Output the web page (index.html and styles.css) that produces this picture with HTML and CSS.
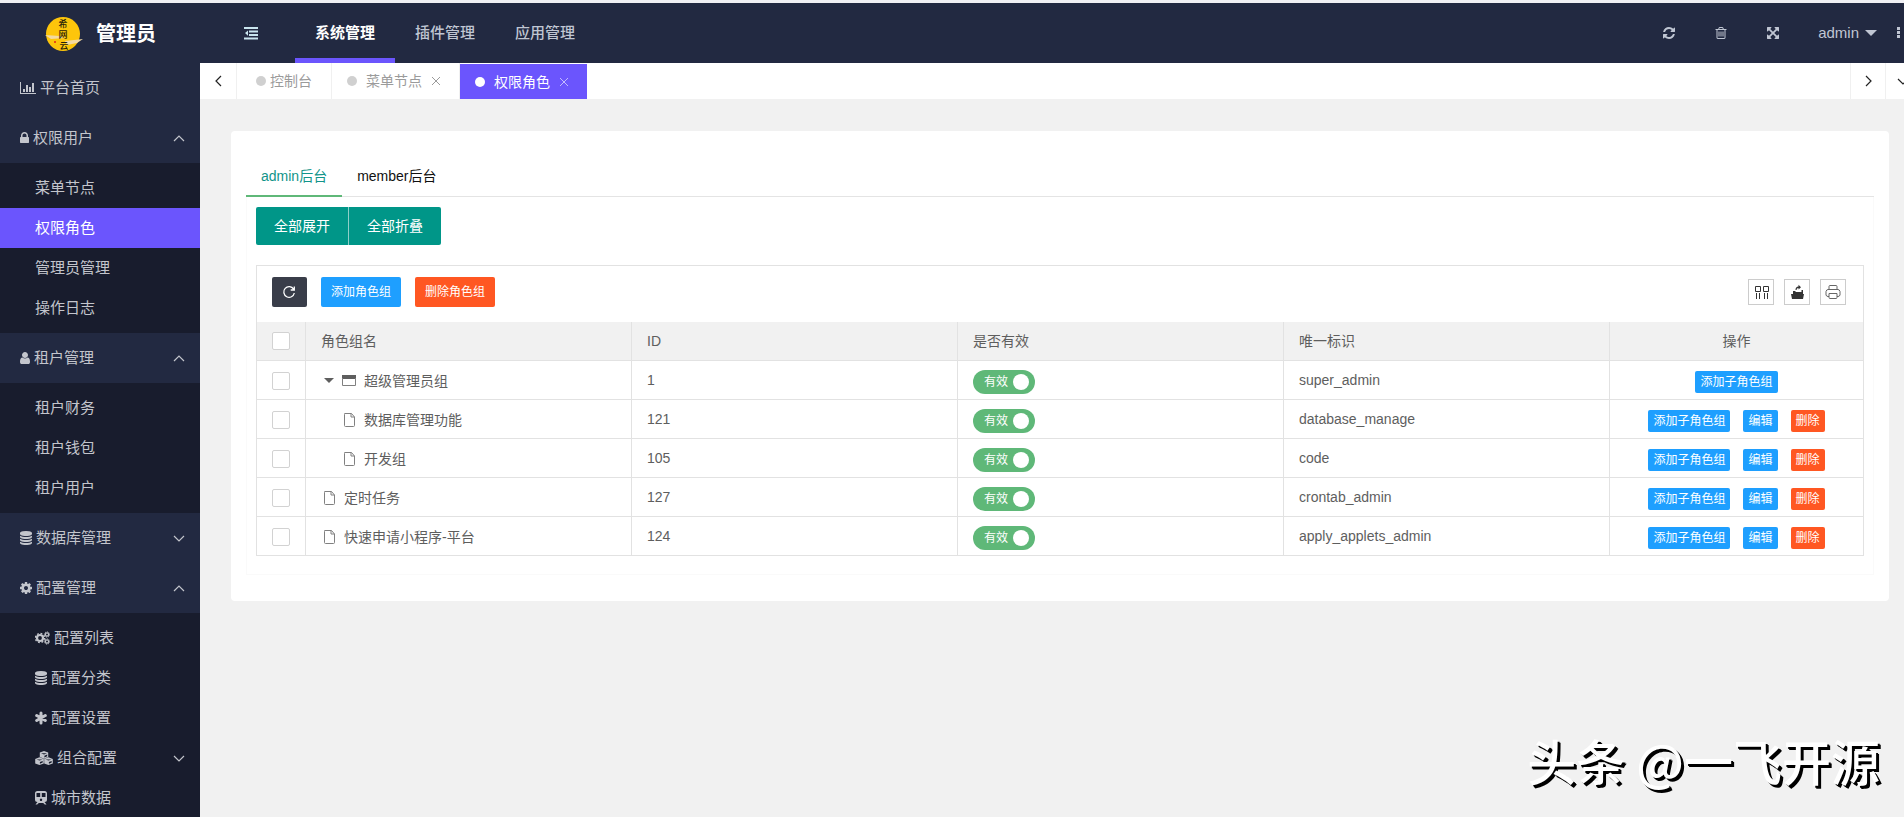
FILE: index.html
```html
<!DOCTYPE html>
<html lang="zh-CN">
<head>
<meta charset="utf-8">
<title>权限角色</title>
<link rel="stylesheet" href="styles.css">
</head>
<body>
<svg class="defs" aria-hidden="true">
  <symbol id="i-db" viewBox="128 0 1536 1792"><path d="M896 768q237 0 443-43t325-127v170q0 69-103 128t-280 93.500-385 34.500-385-34.500-280-93.500-103-128v-170q119 84 325 127t443 43zm0 768q237 0 443-43t325-127v170q0 69-103 128t-280 93.500-385 34.500-385-34.500-280-93.500-103-128v-170q119 84 325 127t443 43zm0-384q237 0 443-43t325-127v170q0 69-103 128t-280 93.500-385 34.500-385-34.500-280-93.500-103-128v-170q119 84 325 127t443 43zm0-1152q208 0 385 34.500t280 93.500 103 128v128q0 69-103 128t-280 93.500-385 34.500-385-34.500-280-93.500-103-128v-128q0-69 103-128t280-93.500 385-34.500z"/></symbol>
  <symbol id="i-cog" viewBox="128 0 1536 1792"><path d="M1152 896q0-106-75-181t-181-75-181 75-75 181 75 181 181 75 181-75 75-181zm512-109v222q0 12-8 23t-20 13l-185 28q-19 54-39 91 35 50 107 138 10 12 10 25t-9 23q-27 37-99 108t-94 71q-12 0-26-9l-138-108q-44 23-91 38-16 136-29 186-7 28-36 28h-222q-14 0-24.500-8.500t-11.500-21.500l-28-184q-49-16-90-37l-141 107q-10 9-25 9-14 0-25-11-126-114-165-168-7-10-7-23 0-12 8-23 15-21 51-66.500t54-70.500q-27-50-41-99l-183-27q-13-2-21-12.500t-8-23.500v-222q0-12 8-23t19-13l186-28q14-46 39-92-40-57-107-138-10-12-10-24 0-10 9-23 26-36 98.500-107.500t94.500-71.500q13 0 26 10l138 107q44-23 91-38 16-136 29-186 7-28 36-28h222q14 0 24.500 8.500t11.500 21.500l28 184q49 16 90 37l142-107q9-9 24-9 13 0 25 10 129 119 165 170 7 8 7 22 0 12-8 23-15 21-51 66.500t-54 70.500q26 50 41 98l183 28q13 2 21 12.500t8 23.500z"/></symbol>
  <symbol id="i-up" viewBox="0 0 12 7"><path d="M1 6l5-5 5 5" fill="none" stroke="currentColor" stroke-width="1.200"/></symbol>
  <symbol id="i-down" viewBox="0 0 12 7"><path d="M1 1l5 5 5-5" fill="none" stroke="currentColor" stroke-width="1.200"/></symbol>
  <symbol id="i-file" viewBox="0 0 20 16"><path d="M3.500 1.500h7l3 3.500v8.500q0 1-1 1h-8q-1 0-1-1v-11q0-1 1-1M10 1.500v3.500h3.500" fill="none" stroke="#808080"/></symbol>
  <symbol id="i-x" viewBox="0 0 10 10"><path d="M1 1l8 8M9 1l-8 8" fill="none" stroke="currentColor"/></symbol>
</svg>
<div class="shell">
  <aside class="side">
    <div class="brand">
      <svg class="logo" viewBox="0 0 38 36" aria-hidden="true">
        <ellipse cx="18" cy="18" rx="17" ry="17" fill="#fdc50b"/>
        <path d="M0 19l15 1 5 2-14 1zM20 25l18-2-6 4-10 2z" fill="#f3d9a0"/>
        <circle cx="10" cy="26" r="1" fill="#e0251b"/>
        <g class="logo-text"><text x="18" y="11">希</text><text x="18" y="22">网</text><text x="19" y="33">云</text></g>
      </svg>
      <span>管理员</span>
    </div>
    <nav>
      <a class="item" href="#"><svg class="w16" viewBox="0 0 16 14"><path d="M0 1h1v11h15v1H0zM3 8h2v3H3zM6 4h2v7H6zM9 6h2v5H9zM12 2h2v9h-2z"/></svg>平台首页</a>
      <a class="item" href="#"><svg class="w9" viewBox="320 0 1152 1792"><path d="M640 768h512v-192q0-106-75-181t-181-75-181 75-75 181v192zm832 96v576q0 40-28 68t-68 28h-960q-40 0-68-28t-28-68v-576q0-40 28-68t68-28h32v-192q0-184 132-316t316-132 316 132 132 316v192h32q40 0 68 28t28 68z"/></svg>权限用户<svg class="arrow"><use href="#i-up"/></svg></a>
      <div class="sub">
        <a href="#">菜单节点</a>
        <a class="on" href="#">权限角色</a>
        <a href="#">管理员管理</a>
        <a href="#">操作日志</a>
      </div>
      <a class="item" href="#"><svg class="w10" viewBox="256 0 1280 1792"><path d="M1536 1399q0 109-62.500 187t-150.500 78h-854q-88 0-150.500-78t-62.500-187q0-85 8.500-160.500t31.500-152 58.500-131 94-89 134.500-34.500q131 128 313 128t313-128q76 0 134.500 34.500t94 89 58.500 131 31.500 152 8.500 160.500zm-256-887q0 159-112.500 271.500t-271.500 112.500-271.500-112.500-112.500-271.500 112.500-271.500 271.500-112.500 271.500 112.500 112.500 271.500z"/></svg>租户管理<svg class="arrow"><use href="#i-up"/></svg></a>
      <div class="sub">
        <a href="#">租户财务</a>
        <a href="#">租户钱包</a>
        <a href="#">租户用户</a>
      </div>
      <a class="item" href="#"><svg class="w12"><use href="#i-db"/></svg>数据库管理<svg class="arrow"><use href="#i-down"/></svg></a>
      <a class="item" href="#"><svg class="w12"><use href="#i-cog"/></svg>配置管理<svg class="arrow"><use href="#i-up"/></svg></a>
      <div class="sub">
        <a href="#"><svg class="w15" viewBox="0 0 15 14"><g fill="none" stroke="currentColor"><circle cx="5" cy="7" r="3" stroke-width="2.200"/><circle cx="5" cy="7" r="4.600" stroke-width="1.400" stroke-dasharray="1.800 1.810"/><circle cx="12" cy="3.500" r="1.600" stroke-width="1.200"/><circle cx="12" cy="3.500" r="2.600" stroke-width="1" stroke-dasharray="1.100 .86"/><circle cx="12" cy="10.500" r="1.600" stroke-width="1.200"/><circle cx="12" cy="10.500" r="2.600" stroke-width="1" stroke-dasharray="1.100 .86"/></g></svg>配置列表</a>
        <a href="#"><svg class="w12"><use href="#i-db"/></svg>配置分类</a>
        <a href="#"><svg class="w12" viewBox="0 0 12 14"><path d="M6 2v10M1.700 4.500l8.600 5M10.300 4.500l-8.600 5" stroke="currentColor" stroke-width="3" stroke-linecap="round"/></svg>配置设置</a>
        <a href="#"><svg class="w18" viewBox="0 0 18 14"><path d="M9 0l4.200 1.600v4.500L9 7.700 4.800 6.100V1.600zM4.500 6.300l4.300 1.600v4.500L4.500 14 .2 12.400V7.900zM13.500 6.300l4.300 1.600v4.500L13.500 14l-4.300-1.600V7.900z"/><path d="M6 2.200l3 1.200 3-1.200M9.400 6.500l2.800-1.200V3.600L9.400 4.800zM1.500 8.400l3 1.200 3-1.200M4.900 12.800l2.800-1.200V9.900l-2.800 1.200zM10.500 8.400l3 1.200 3-1.200M13.900 12.800l2.800-1.200V9.900l-2.800 1.200z" fill="#181c2d" stroke="none"/></svg>组合配置<svg class="arrow"><use href="#i-down"/></svg></a>
        <a href="#"><svg class="w12" viewBox="0 0 12 14"><path fill-rule="evenodd" d="M2.500 0h7Q12 0 12 2.500v6Q12 11 9.500 11l2 2.500H9.800L8.200 12H3.800l-1.600 1.500H.5L2.500 11Q0 11 0 8.500v-6Q0 0 2.500 0zM1.500 2v4h3.700V2zM6.800 2v4h3.700V2zM6 7.600a1.200 1.200 0 1 0 .01 0z"/></svg>城市数据</a>
      </div>
    </nav>
  </aside>
  <div class="main">
    <header class="top">
      <button class="icon-btn burger" aria-label="收起菜单"><svg class="w14" viewBox="0 0 14 14"><path d="M0 1h14v2H0zM5 4.500h9v2H5zM5 8h9v2H5zM0 11.500h14v2H0zM4 4.500v5.200L1 7.100z"/></svg></button>
      <nav class="menu">
        <a class="on" href="#">系统管理</a>
        <a href="#">插件管理</a>
        <a href="#">应用管理</a>
      </nav>
      <div class="tools">
        <button class="icon-btn" aria-label="刷新"><svg class="w14" viewBox="0 0 1792 1792"><path d="M1639 1056q0 5-1 7-64 268-268 434.500t-478 166.500q-146 0-282.500-55t-243.500-157l-129 129q-19 19-45 19t-45-19-19-45v-448q0-26 19-45t45-19h448q26 0 45 19t19 45-19 45l-137 137q71 66 161 102t187 36q134 0 250-65t186-179q11-17 53-117 8-23 30-23h192q13 0 22.500 9.500t9.500 22.500zm25-800v448q0 26-19 45t-45 19h-448q-26 0-45-19t-19-45 19-45l138-138q-148-137-349-137-134 0-250 65t-186 179q-11 17-53 117-8 23-30 23h-199q-13 0-22.500-9.500t-9.500-22.500v-7q65-268 270-434.500t480-166.500q146 0 284 55.500t245 156.500l130-129q19-19 45-19t45 19 19 45z"/></svg></button>
        <button class="icon-btn" aria-label="清除缓存"><svg class="w14" viewBox="0 0 1792 1792"><path d="M704 736v576q0 14-9 23t-23 9h-64q-14 0-23-9t-9-23v-576q0-14 9-23t23-9h64q14 0 23 9t9 23zm256 0v576q0 14-9 23t-23 9h-64q-14 0-23-9t-9-23v-576q0-14 9-23t23-9h64q14 0 23 9t9 23zm256 0v576q0 14-9 23t-23 9h-64q-14 0-23-9t-9-23v-576q0-14 9-23t23-9h64q14 0 23 9t9 23zm128 724v-948h-896v948q0 22 7 40.500t14.500 27 10.500 8.500h832q3 0 10.500-8.500t14.500-27 7-40.500zm-672-1076h448l-48-117q-7-9-17-11h-317q-10 2-17 11zm928 32v64q0 14-9 23t-23 9h-96v948q0 83-47 143.500t-113 60.500h-832q-66 0-113-58.500t-47-141.500v-952h-96q-14 0-23-9t-9-23v-64q0-14 9-23t23-9h309l70-167q15-37 54-63t79-26h320q40 0 79 26t54 63l70 167h309q14 0 23 9t9 23z"/></svg></button>
        <button class="icon-btn" aria-label="全屏"><svg class="w14" viewBox="0 0 1792 1792"><path d="M1411 541l-355 355 355 355 144-144q29-31 70-14 39 17 39 59v448q0 26-19 45t-45 19h-448q-42 0-59-40-17-39 14-69l144-144-355-355-355 355 144 144q31 30 14 69-17 40-59 40h-448q-26 0-45-19t-19-45v-448q0-42 40-59 39-17 69 14l144 144 355-355-355-355-144 144q-19 19-45 19-12 0-24-5-40-17-40-59v-448q0-26 19-45t45-19h448q42 0 59 40 17 39-14 69l-144 144 355 355 355-355-144-144q-31-30-14-69 17-40 59-40h448q26 0 45 19t19 45v448q0 42-39 59-13 5-25 5-26 0-45-19z"/></svg></button>
        <button class="icon-btn user">admin<svg class="caret" viewBox="0 0 12 6"><path d="M0 0h12L6 6z"/></svg></button>
        <button class="icon-btn more" aria-label="更多"><svg viewBox="0 0 4 12"><path d="M0 0h3v3H0zM0 4h3v3H0zM0 8h3v3H0z"/></svg></button>
      </div>
    </header>
    <div class="tabs">
      <button class="tab-arrow prev" aria-label="上一个"><svg viewBox="0 0 7 12"><path d="M6 1L1 6l5 5"/></svg></button>
      <a class="tab home" href="#"><i></i>控制台</a>
      <a class="tab" href="#"><i></i>菜单节点<svg><use href="#i-x"/></svg></a>
      <a class="tab on" href="#"><i></i>权限角色<svg><use href="#i-x"/></svg></a>
      <span class="fill"></span>
      <button class="tab-arrow" aria-label="下一个"><svg viewBox="0 0 7 12"><path d="M1 1l5 5-5 5"/></svg></button>
      <button class="tab-arrow" aria-label="标签操作"><svg class="wide" viewBox="0 0 12 7"><path d="M1 1l5 5 5-5"/></svg></button>
    </div>
    <main class="card">
      <div class="titles"><a class="on" href="#">admin后台</a><a href="#">member后台</a></div>
      <section class="pane">
        <div class="group"><button>全部展开</button><button>全部折叠</button></div>
        <div class="grid">
          <div class="bar">
            <button class="btn dark" aria-label="刷新"><svg viewBox="0 0 14 14"><path d="M11.600 4.200A5.300 5.300 0 1 0 12.300 8M12.300 1.500v3.500H8.700" fill="none" stroke="currentColor" stroke-width="1.300"/></svg></button>
            <button class="btn blue">添加角色组</button>
            <button class="btn red">删除角色组</button>
            <span class="fill"></span>
            <button class="tool" aria-label="筛选列"><svg viewBox="0 0 16 16"><path d="M2.500 2.500h5v5h-5zM10.500 2.500h5v5h-5zM3.500 9v6M6.500 9v6M11.500 9v6M14.500 9v6" fill="none" stroke="currentColor"/></svg></button>
            <button class="tool" aria-label="导出"><svg viewBox="0 0 16 16"><path d="M2 10h13l-1 5H3zM4 9V7h2.500v1h6V6H14v4H4zM6.500 6q0-3.500 3-3.500V.8L12 3.300 9.500 5.500V4Q7.500 4 7.500 6z"/></svg></button>
            <button class="tool" aria-label="打印"><svg viewBox="0 0 16 16"><path d="M4 5.500v-3q0-1 1-1h6q1 0 1 1v3M4 12.500H3q-1.500 0-2-1.500V7.500Q1.500 5.500 3 5.500h10q1.500 0 2 2V11q-.5 1.500-2 1.500h-1M4 9.500h8v4q0 1-1 1H5q-1 0-1-1z" fill="none" stroke="#666"/></svg></button>
          </div>
          <table>
            <colgroup><col class="c-check"><col><col><col><col><col class="c-act"></colgroup>
            <thead><tr><th><input type="checkbox" aria-label="全选"></th><th>角色组名</th><th>ID</th><th>是否有效</th><th>唯一标识</th><th class="act">操作</th></tr></thead>
            <tbody>
              <tr><td><input type="checkbox" aria-label="选择"></td><td><div class="name"><svg class="tree" viewBox="0 0 20 16"><path d="M3 5h10l-5 5z"/></svg><svg class="tree" viewBox="0 0 20 16"><path d="M1 2h14v4H1z"/><path d="M1.500 5v7.500h13V5" fill="none" stroke="#808080"/></svg>超级管理员组</div></td><td>1</td><td><label class="switch">有效<input type="checkbox" checked></label></td><td>super_admin</td><td><div class="acts"><button class="mini blue">添加子角色组</button></div></td></tr>
              <tr><td><input type="checkbox" aria-label="选择"></td><td><div class="name child"><svg class="tree"><use href="#i-file"/></svg>数据库管理功能</div></td><td>121</td><td><label class="switch">有效<input type="checkbox" checked></label></td><td>database_manage</td><td><div class="acts"><button class="mini blue">添加子角色组</button><button class="mini blue">编辑</button><button class="mini red">删除</button></div></td></tr>
              <tr><td><input type="checkbox" aria-label="选择"></td><td><div class="name child"><svg class="tree"><use href="#i-file"/></svg>开发组</div></td><td>105</td><td><label class="switch">有效<input type="checkbox" checked></label></td><td>code</td><td><div class="acts"><button class="mini blue">添加子角色组</button><button class="mini blue">编辑</button><button class="mini red">删除</button></div></td></tr>
              <tr><td><input type="checkbox" aria-label="选择"></td><td><div class="name"><svg class="tree"><use href="#i-file"/></svg>定时任务</div></td><td>127</td><td><label class="switch">有效<input type="checkbox" checked></label></td><td>crontab_admin</td><td><div class="acts"><button class="mini blue">添加子角色组</button><button class="mini blue">编辑</button><button class="mini red">删除</button></div></td></tr>
              <tr><td><input type="checkbox" aria-label="选择"></td><td><div class="name"><svg class="tree"><use href="#i-file"/></svg>快速申请小程序-平台</div></td><td>124</td><td><label class="switch">有效<input type="checkbox" checked></label></td><td>apply_applets_admin</td><td><div class="acts"><button class="mini blue">添加子角色组</button><button class="mini blue">编辑</button><button class="mini red">删除</button></div></td></tr>
            </tbody>
          </table>
        </div>
      </section>
    </main>
  </div>
</div>
<div class="mark">头条 @一飞开源</div>
</body>
</html>
```
FILE: styles.css
```css
* { box-sizing: border-box; }
body {
  margin: 0;
  height: 100vh;
  overflow: hidden;
  background: #f1f1f1;
  border-top: 3px solid #f0f0f4;
  font: 14px/20px "Liberation Sans", "Noto Sans CJK SC", sans-serif;
  color: #5e5e5e;
}
a { color: inherit; text-decoration: none; }
button { font: inherit; border: 0; padding: 0; margin: 0; background: none; color: inherit; cursor: pointer; }
svg { fill: currentColor; flex: none; display: block; }
.defs { position: absolute; width: 0; height: 0; }
.fill { flex: 1; }

.shell { display: grid; grid-template-columns: 200px minmax(0, 1fr); width: calc(100% + 16px); height: 100%; }
.side { background: #222941; color: #c3c5cc; overflow: hidden; font-size: 15px; }
.brand { height: 60px; display: flex; align-items: center; gap: 13px; padding: 2px 0 0 45px; color: #fff; font-size: 20px; font-weight: bold; }
.logo { width: 38px; height: 36px; }
.logo-text { font-size: 9px; font-weight: 500; text-anchor: middle; fill: #2a2208; }
.item, .sub a { display: flex; align-items: center; gap: 4px; }
.item { height: 50px; padding: 0 15px 0 20px; }
.sub { background: #181c2d; padding: 5px 0; }
.sub a { height: 40px; padding: 0 15px 0 35px; }
.sub .on { background: #6b55fd; color: #fff; }
.arrow { width: 12px; height: 7px; margin-left: auto; }
.w9, .w10, .w12, .w14, .w15, .w16, .w18 { height: 14px; }
.w9 { width: 9px; }
.w10 { width: 10px; }
.w12 { width: 12px; }
.w14 { width: 14px; }
.w15 { width: 15px; }
.w16 { width: 16px; }
.w18 { width: 18px; }

.top { height: 60px; background: #222941; color: #c0c6d3; display: flex; align-items: center; font-size: 15px; }
.burger { margin: 0 37px 0 44px; color: #c9e4ee; }
.menu { display: flex; font-weight: 500; }
.menu a { height: 60px; padding: 0 20px; display: flex; align-items: center; border-bottom: 5px solid transparent; border-top: 5px solid transparent; }
.menu .on { color: #fff; border-bottom-color: #6b55fd; font-weight: bold; }
.tools { margin-left: auto; display: flex; align-items: center; padding-right: 19px; }
.tools .icon-btn { margin-right: 38px; }
.tools .user { display: flex; align-items: center; gap: 6px; margin-right: 20px; }
.tools .more { margin-right: 0; }
.more svg { width: 4px; height: 12px; }
.caret { width: 12px; height: 6px; }

.tabs { height: 36px; background: #fff; display: flex; align-items: stretch; color: #9b9b9b; }
.tab { display: flex; align-items: center; gap: 9px; padding: 0 18px 0 15px; border-right: 1px solid #f0f0f0; }
.tab.home { gap: 4px; padding: 0 19px; }
.tab i { width: 10px; height: 10px; border-radius: 50%; background: #d0d0d0; }
.tab svg { width: 10px; height: 10px; }
.tab.on { background: #6b55fd; color: #fff; border: 0; border-top: 1px solid #fff; }
.tab.on i { background: #fff; }
.tab.on svg { color: #c4bbfe; }
.tab-arrow { width: 35px; display: flex; align-items: center; justify-content: center; border-left: 1px solid #f0f0f0; color: #222; }
.tab-arrow.prev { width: 37px; border-left: 0; border-right: 1px solid #f0f0f0; }
.tab-arrow svg { width: 7px; height: 12px; fill: none; stroke: currentColor; stroke-width: 1.2; }
.tab-arrow .wide { width: 12px; height: 7px; }

.card { margin: 32px 31px 0; padding: 26px 15px 26px; background: #fff; border-radius: 4px; }
.titles { display: flex; height: 40px; border-bottom: 1px solid #e4e4e4; color: #111; }
.titles a { height: 40px; padding: 9px 15px 0; }
.titles .on { color: #11948a; border-bottom: 2px solid #5fb878; }
.pane { border: 1px solid #fafafa; border-top: 0; padding: 10px 9px 18px; }
.group { display: flex; margin-bottom: 20px; }
.group button { height: 38px; padding: 0 18px; background: #009688; color: #fff; border-radius: 2px 0 0 2px; }
.group button + button { border-left: 1px solid #8fcfc8; border-radius: 0 2px 2px 0; }
.grid { border: 1px solid #e2e2e2; }
.bar { display: flex; align-items: center; padding: 11px 17px 15px 15px; height: 56px; }
.btn { height: 30px; padding: 0 10px; border-radius: 2px; color: #fff; font-size: 12px; margin-right: 14px; }
.dark { width: 35px; background: #393d49; }
.dark svg { width: 14px; height: 14px; }
.blue { background: #1e9fff; color: #fff; }
.red { background: #ff5722; color: #fff; }
.tool { width: 26px; height: 26px; border: 1px solid #ccc; display: grid; place-items: center; color: #333; margin-left: 10px; }
.tool svg { width: 16px; height: 16px; }

table { width: 100%; table-layout: fixed; border-collapse: separate; border-spacing: 0; }
.c-check { width: 49px; }
.c-act { width: 253px; }
th, td { height: 39px; padding: 0 15px; text-align: left; font-weight: normal; border: 0 solid #e2e2e2; border-width: 0 1px 1px 0; }
th { background: #f1f1f1; }
tr > :last-child { border-right: 0; }
tbody tr:last-child td { height: 38px; border-bottom: 0; }
th.act { text-align: center; }
input { appearance: none; margin: 0; display: block; background: #fff; }
th input, td > input { width: 18px; height: 18px; border: 1px solid #d2d2d2; border-radius: 2px; }
td > input { margin-top: 2px; }
.name { display: flex; align-items: center; padding-top: 1px; }
.name.child { padding-left: 20px; }
.tree { width: 20px; height: 16px; }
.tree:last-of-type { margin-right: 3px; }
.switch { display: flex; align-items: center; justify-content: space-between; width: 62px; height: 24px; padding: 0 6px 0 11px; margin-top: 3px; border-radius: 12px; background: #5fb878; color: #fff; font-size: 12px; }
.switch input { width: 16px; height: 16px; border-radius: 50%; }
.acts { display: flex; justify-content: center; gap: 13px; margin-top: 3px; }
.mini { height: 22px; padding: 0 5px; border-radius: 2px; font-size: 12px; }

.mark { position: fixed; right: 24px; bottom: 22px; font: 500 49px/70px "Noto Sans CJK SC", sans-serif; color: #fff; text-shadow: 2px 2px 0 #000, 3px 3px 0 #000; white-space: nowrap; }
```
